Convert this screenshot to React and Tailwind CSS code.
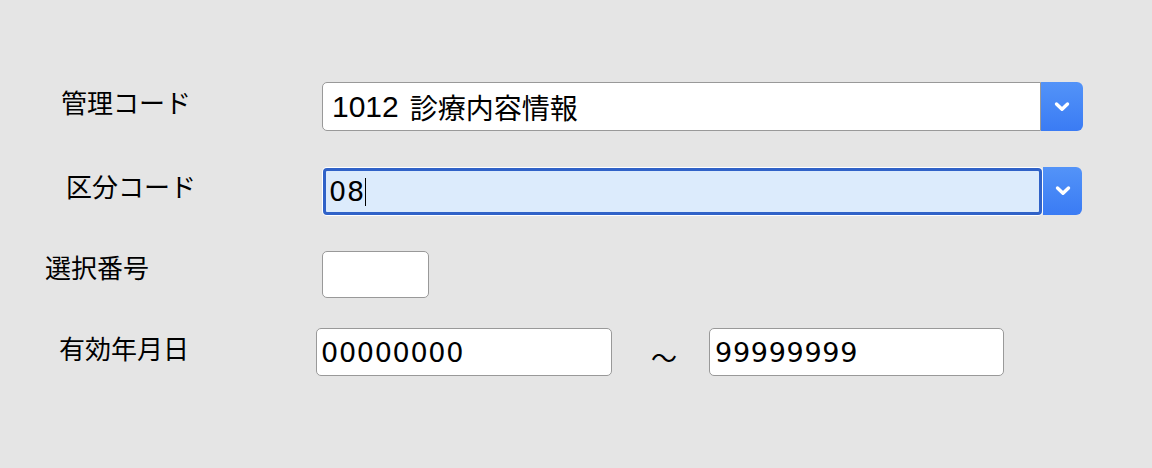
import React from "react";

function Chevron() {
  return (
    <svg width="16" height="12" viewBox="0 0 16 12" fill="none">
      <path d="M2.5 3 L8 8.3 L13.5 3" stroke="white" strokeWidth="3.4" strokeLinecap="round" strokeLinejoin="round" />
    </svg>
  );
}

export default function App() {
  return (
    <div className="w-[1152px] h-[468px] bg-[#e5e5e5] text-black font-['Noto_Sans_CJK_JP',sans-serif] flex flex-col pt-[82px]">
      {/* Row 1 */}
      <div className="flex h-[49px]">
        <div className="w-[322px] pl-[61px] pt-[7px] text-[26px] leading-[26px]">管理コード</div>
        <div className="flex">
          <div className="w-[719px] h-[49px] bg-white border-[1.5px] border-[#999999] rounded-l-[5px] flex items-center pl-[9px] text-[28px] leading-none">
            <span className="font-['Liberation_Sans',sans-serif] text-[30px]">1012</span>
            <span className="ml-[11px]">診療内容情報</span>
          </div>
          <div className="w-[42px] h-[49px] rounded-r-[6px] bg-gradient-to-b from-[#5393f8] to-[#3a7bf4] flex items-center justify-center">
            <Chevron />
          </div>
        </div>
      </div>

      {/* Row 2 */}
      <div className="flex h-[49px] mt-[36px]">
        <div className="w-[322px] pl-[66px] pt-[6px] text-[26px] leading-[26px]">区分コード</div>
        <div className="flex">
          <div className="w-[721px] h-[49px] bg-white p-[1px] rounded-[5px]">
            <div className="w-full h-full bg-[#dcebfc] border-[3px] border-[#3062c8] rounded-[4px] flex items-center pl-[3px] text-[27px] leading-none tracking-[0.7px] font-['DejaVu_Sans',sans-serif]">
              <span>08</span>
              <span className="inline-block w-[1px] h-[28px] bg-black" />
            </div>
          </div>
          <div className="w-[39px] h-[48px] rounded-r-[6px] bg-gradient-to-b from-[#5393f8] to-[#3a7bf4] flex items-center justify-center">
            <Chevron />
          </div>
        </div>
      </div>

      {/* Row 3 */}
      <div className="flex h-[47px] mt-[35px]">
        <div className="w-[322px] pl-[45px] pt-[3px] text-[26px] leading-[26px]">選択番号</div>
        <div className="w-[107px] h-[47px] bg-white border-[1.5px] border-[#999999] rounded-[5px]" />
      </div>

      {/* Row 4 */}
      <div className="flex h-[48px] mt-[30px]">
        <div className="w-[316px] pl-[59px] pt-[7px] text-[26px] leading-[26px]">有効年月日</div>
        <div className="w-[296px] h-[48px] bg-white border-[1.5px] border-[#999999] rounded-[5px] flex items-center pl-[4px] text-[27px] leading-none tracking-[0.7px] font-['DejaVu_Sans',sans-serif]">
          00000000
        </div>
        <div className="w-[97px] flex items-center pl-[39px] pt-[10px] text-[26px] leading-none">〜</div>
        <div className="w-[295px] h-[48px] bg-white border-[1.5px] border-[#999999] rounded-[5px] flex items-center pl-[5px] text-[27px] leading-none tracking-[0.7px] font-['DejaVu_Sans',sans-serif]">
          99999999
        </div>
      </div>
    </div>
  );
}
